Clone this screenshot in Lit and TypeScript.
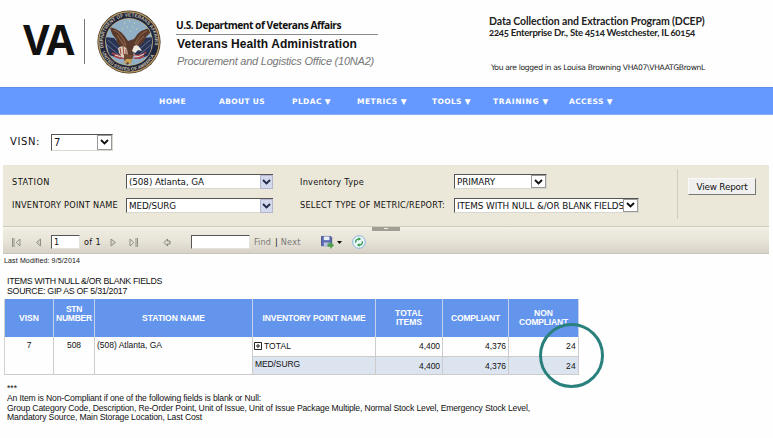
import { LitElement, html, css, svg } from "lit";
import { customElement, property } from "lit/decorators.js";

/** One line of text, tracked so that it fills the given width. */
@customElement("fit-text")
class FitText extends LitElement {
  @property() text = "";
  @property({ type: Number }) w = 0;

  static styles = css`
    :host { display: inline-block; white-space: pre; flex: none; text-align: left; }
    .run { display: inline-block; }
  `;

  updated() {
    const run = this.renderRoot.querySelector(".run") as HTMLElement;
    run.style.letterSpacing = "0px";
    const natural = run.getBoundingClientRect().width;
    run.style.letterSpacing = (this.w - natural) / this.text.length + "px";
  }

  render() {
    return html`<span class="run">${this.text}</span>`;
  }
}

const fit = (text: string, w: number) => html`<fit-text .text=${text} .w=${w}></fit-text>`;

const menu = [
  { text: "HOME", w: 27, gap: 0 },
  { text: "ABOUT US", w: 46, gap: 33 },
  { text: "PLDAC ▼", w: 39, gap: 27 },
  { text: "METRICS ▼", w: 50, gap: 26 },
  { text: "TOOLS ▼", w: 39, gap: 25 },
  { text: "TRAINING ▼", w: 56, gap: 22 },
  { text: "ACCESS ▼", w: 44, gap: 20 },
];

const chevron = html`<svg width="9" height="6" viewBox="0 0 9 6"><path d="M1 1L4.5 4.5L8 1" fill="none" stroke="currentColor" stroke-width="1.9"/></svg>`;

const seal = svg`
  <svg width="64" height="64" viewBox="0 0 64 64">
    <defs>
      <path id="arcTop" d="M6.6 38A26 26 0 1 1 57.4 38"/>
      <path id="arcBottom" d="M5 42A28.8 28.8 0 0 0 59 42"/>
      <clipPath id="disc"><circle cx="32" cy="32" r="23.2"/></clipPath>
    </defs>
    <circle cx="32" cy="32" r="31.6" fill="#4b3c2a"/>
    <circle cx="32" cy="32" r="30.2" fill="none" stroke="#b59a68" stroke-width="1.3"/>
    <circle cx="32" cy="32" r="29.3" fill="#20263c"/>
    <circle cx="32" cy="32" r="23.9" fill="#c0a673"/>
    <circle cx="32" cy="32" r="23.2" fill="#91b0c6"/>
    <g font-family="Liberation Sans" font-weight="bold" font-size="4.7" fill="#c9bfa6">
      <text><textPath href="#arcTop" textLength="90">DEPARTMENT OF VETERANS AFFAIRS</textPath></text>
      <text><textPath href="#arcBottom" textLength="66">UNITED STATES OF AMERICA</textPath></text>
    </g>
    <g clip-path="url(#disc)">
      <path d="M8 27L17 28L29 42L24 49L12 45Z" fill="#293353"/>
      <path d="M56 27L47 28L36 42L42 49L53 45Z" fill="#293353"/>
      <path d="M11 30l15 13M9 34l14 12M53 30L38 43M55 34L41 46" stroke="#65708e" stroke-width="1"/>
      <path d="M15 43q6 4 13 2M17 46q6 3 12 2M49 42q-5 5-12 3M47 46q-4 3-10 2" fill="none" stroke="#ae4649" stroke-width="1.7"/>
      <path d="M18 45q6 3 11 1M47 44q-5 4-10 2" fill="none" stroke="#e9e2dd" stroke-width="1"/>
      <path d="M13 17Q24 19 31 31L37 29Q43 18 56 18Q54 23 49 27Q48 32 42 36L37 40L36 47L27 46L26 39Q20 35 19 29Q14 24 13 17Z" fill="#58392b"/>
      <path d="M17 20Q25 24 29 35M20 25Q24 31 29 38M50 21Q43 23 38 34M47 26Q42 30 38 37" fill="none" stroke="#8a6144" stroke-width="1.3"/>
      <path d="M21 38Q26 34 30 39L31 46L26 48L22 43Z" fill="#d9cfbd"/>
      <path d="M23 38l1 6M26 37l1 8M29 39v7" stroke="#9d4138" stroke-width="1"/>
      <path d="M37 36Q41 34 43 38L45 41L41 40L38 43L35 41Z" fill="#eeeae2"/>
      <path d="M27 44L37 45L34 52L30 55L27 50Z" fill="#6b4631"/>
      <path d="M29 49l-3 5 5-2 3 3 1-6" fill="#c8a056"/>
      <path d="M27 13h1M32 11h1M37 13h1M30 17h1M35 17h1M25 19h1M33 21h1M39 19h1" stroke="#dbd8a4" stroke-width="1.1"/>
    </g>
  </svg>`;

@customElement("app-root")
class AppRoot extends LitElement {
  static styles = css`
    :host { display: block; position: relative; width: 773px; height: 438px; overflow: hidden; background: #fefefe; color: #111; font-family: "Liberation Sans", Arial, sans-serif; }
    * { box-sizing: border-box; }
    svg { display: block; flex: none; }

    .head { display: flex; height: 87px; }
    .va { margin: 10px 0 0 23px; width: 50px; font: bold 41px/58px "Open Sans", sans-serif; color: #111; }
    .rule { width: 1px; height: 45px; margin: 19px 12px 0 11px; background: #777; }
    .seal { margin-top: 10px; width: 64px; }
    .org { display: flex; flex-direction: column; width: 202px; margin: 17px 0 0 15px; }
    .dept { height: 17px; font: bold 10.2px/16px "Open Sans", sans-serif; }
    .vha { height: 19px; padding: 1px 0 0 1px; border-top: 1px solid #888; font-weight: bold; font-size: 12px; line-height: 16px; }
    .office { padding-left: 1px; font-style: italic; font-size: 11px; line-height: 16px; color: #777; }
    .program { display: flex; flex-direction: column; margin: 15px 0 0 111px; font-family: Lato, sans-serif; font-weight: bold; color: #222; }
    .dcep { font-size: 10.5px; line-height: 12px; height: 12px; }
    .addr { font-size: 9.6px; line-height: 12px; height: 12px; font-variant-numeric: oldstyle-nums; }
    .login { margin: 23px 0 0 2px; font: 7.6px/12px "DejaVu Sans", sans-serif; }

    .nav { display: flex; align-items: center; height: 28px; padding: 2px 0 0 159px; background: #6699ff; border-top: 1px solid #5f8ee8; border-bottom: 1px solid #86acf8; color: #fff; font: bold 7.5px/12px "DejaVu Sans", sans-serif; }

    .visn { display: flex; align-items: center; height: 50px; padding: 4px 0 0 10px; font: 10px/14px "DejaVu Sans", sans-serif; }
    .select { display: flex; align-items: stretch; height: 15px; background: #fff; border: 1px solid #d8d8d0; border-top-color: #555; border-left-color: #555; font: 8.8px/14px "DejaVu Sans", sans-serif; }
    .select .val { flex: 1; padding-left: 2px; white-space: nowrap; overflow: visible; width: 0; }
    .select .arrow { display: flex; align-items: center; justify-content: center; width: 15px; border: 1px solid #999; background: #fff; }
    .s-visn { width: 62px; height: 17px; margin-left: 11px; font-size: 10px; line-height: 15px; }
    .combo { border-right: 0; }
    .combo .arrow { width: 13px; height: 14px; border-color: #b3b8ce; background: #d3d8ec; color: #222b4c; }

    .params { display: flex; width: 766px; height: 61px; margin-left: 3px; background: #ece8d9; font: 8.2px/12px "DejaVu Sans", sans-serif; }
    .fields { display: grid; grid-template-columns: 114px 147px 27px 154px 1fr; grid-template-rows: 23px 24px; align-items: center; width: 674px; height: 53px; padding: 5px 0 0 9px; }
    .c4 { grid-column: 4; }
    .s-prim { width: 93px; }
    .s-metric { width: 185px; }
    .side { display: flex; border-left: 1px solid #cfcbbd; height: 50px; margin-top: 4px; padding: 9px 0 0 10px; }
    .btn { width: 68px; height: 17px; background: #f0f0ef; border: 1px solid #fafafa; border-right-color: #777; border-bottom-color: #777; text-align: center; font: 8.8px/16px "DejaVu Sans", sans-serif; }

    .split { display: flex; justify-content: center; width: 766px; height: 3px; margin-left: 3px; background: #f3f1e7; border-top: 1px solid #d0cdbf; }
    .grip { width: 28px; height: 4px; background: #a19f95; z-index: 1; display: flex; justify-content: center; }
    .dot { width: 4px; height: 1px; margin-top: 1px; background: #f0efe8; }

    .bar { display: flex; align-items: center; width: 766px; height: 25px; margin-left: 3px; padding: 2px 0 0 8px; background: linear-gradient(#efece1, #e7e3d7 50%, #d6d2c8); border-bottom: 1px solid #c8c5bb; font: 9px/12px "DejaVu Sans Condensed", sans-serif; }
    .box { height: 14px; background: #fff; border: 1px solid #e4e2da; border-top-color: #555; border-left-color: #555; padding-left: 2px; line-height: 12px; }
    .find { color: #777; }

    .report { display: flex; flex-direction: column; padding-left: 4px; }
    .modified { font-size: 7px; line-height: 13px; height: 22px; }
    .modified, .title { white-space: nowrap; }
    .title { padding-left: 3px; font-size: 8.8px; line-height: 11px; height: 10px; }
    .table { display: grid; grid-template-columns: 49px 41px 158px 123px 67px 66px 70px; grid-template-rows: 38px 19px 19px; width: 575px; margin-top: 3px; font-size: 8.5px; line-height: 9px; border-left: 1px solid #d3d3d3; }
    .th { display: flex; flex-direction: column; align-items: center; justify-content: center; background: #6495ed; color: #fff; font-weight: bold; border-right: 1px solid #c4d2ea; }
    .th.up { padding-bottom: 9px; }
    .td { border-right: 1px solid #ccc; padding: 4px 2px 0 2px; }
    .tall { grid-row: span 2; border-bottom: 1px solid #ccc; }
    .mid { text-align: center; }
    .num { text-align: right; padding-top: 5px; }
    .tot { display: flex; gap: 2px; padding-top: 5px; padding-left: 1px; }
    .alt { background: #dce4f0; border-top: 1px solid #ccc; border-bottom: 1px solid #ccc; padding-top: 3px; }
    .alt.num { padding-top: 5px; }
    .notes { display: flex; flex-direction: column; padding: 9px 0 0 3px; font-size: 8.6px; line-height: 9.5px; }
    .notes fit-text { height: 9.6px; }
    .stars { height: 10px; }

    .ring { position: absolute; left: 539px; top: 323px; width: 65px; height: 65px; border: 3px solid #2a807d; border-radius: 50%; }

    .m3 { margin-left: 3px; } .m5 { margin-left: 5px; } .m9 { margin-left: 9px; } .m4 { margin-left: 4px; }
    .m10 { margin-left: 10px; } .m12 { margin-left: 12px; } .m14 { margin-left: 14px; } .m16 { margin-left: 16px; }
    .m20 { margin-left: 20px; } .m24 { margin-left: 24px; }
    .page { width: 29px; } .query { width: 59px; }
  `;

  select(value: string, w: number, cls: string) {
    return html`<div class="select ${cls}"><span class="val">${fit(value, w)}</span><span class="arrow">${chevron}</span></div>`;
  }

  render() {
    return html`
      <header class="head">
        <div class="va">${fit("VA", 48)}</div>
        <div class="rule"></div>
        <div class="seal">${seal}</div>
        <div class="org">
          <div class="dept">${fit("U.S. Department of Veterans Affairs", 165)}</div>
          <div class="vha">${fit("Veterans Health Administration", 180)}</div>
          <div class="office">${fit("Procurement and Logistics Office (10NA2)", 197)}</div>
        </div>
        <div class="program">
          <div class="dcep">${fit("Data Collection and Extraction Program (DCEP)", 216)}</div>
          <div class="addr">${fit("2245 Enterprise Dr., Ste 4514 Westchester, IL 60154", 206)}</div>
          <div class="login">${fit("You are logged in as Louisa Browning VHA07\\VHAATGBrownL", 214)}</div>
        </div>
      </header>
      <nav class="nav">
        ${menu.map((m) => html`<span style="margin-left:${m.gap}px">${fit(m.text, m.w)}</span>`)}
      </nav>
      <div class="visn">${fit("VISN:", 30)}${this.select("7", 6, "s-visn")}</div>
      <section class="params">
        <div class="fields">
          ${fit("STATION", 38)}
          ${this.select("(508) Atlanta, GA", 75, "combo")}
          <span class="c4">${fit("Inventory Type", 64)}</span>
          ${this.select("PRIMARY", 38, "s-prim")}
          ${fit("INVENTORY POINT NAME", 106)}
          ${this.select("MED/SURG", 47, "combo")}
          <span class="c4">${fit("SELECT TYPE OF METRIC/REPORT:", 145)}</span>
          ${this.select("ITEMS WITH NULL &/OR BLANK FIELDS", 167, "s-metric")}
        </div>
        <div class="side"><div class="btn">${fit("View Report", 51)}</div></div>
      </section>
      <div class="split"><div class="grip"><div class="dot"></div></div></div>
      <div class="bar">
        <svg width="10" height="9" viewBox="0 0 10 9" fill="#e4e1d8" stroke="#918f88"><path d="M1.5 0v9M3 0v9" /><path d="M9 1v7L5.2 4.5Z"/></svg>
        <svg class="m14" width="7" height="9" viewBox="0 0 7 9" fill="#d4d1c8" stroke="#918f88"><path d="M5.5 1v7L1.5 4.5Z"/></svg>
        <div class="box page m9">1</div>
        <span class="m4">${fit("of 1", 17)}</span>
        <svg class="m9" width="7" height="9" viewBox="0 0 7 9" fill="#d4d1c8" stroke="#918f88"><path d="M1 1v7L5.5 4.5Z"/></svg>
        <svg class="m12" width="10" height="9" viewBox="0 0 10 9" fill="#e4e1d8" stroke="#918f88"><path d="M1 1v7L4.8 4.5Z"/><path d="M7 0v9M8.5 0v9"/></svg>
        <svg class="m24" width="8" height="9" viewBox="0 0 8 9" fill="#dedbd2" stroke="#858379"><path d="M1 4.5L4.5 1v2H7v3H4.5v2Z"/></svg>
        <div class="box query m20"></div>
        <span class="find m4">${fit("Find", 17)}</span>
        <span class="m4">|</span>
        <span class="find m3">${fit("Next", 20)}</span>
        <svg class="m20" width="13" height="14" viewBox="0 0 14 15">
          <path d="M.5 1.5h10l1 1v9h-11Z" fill="#5a6ab0" stroke="#46548f"/>
          <path d="M3 1.5h6v4H3Z" fill="#e9edf8"/><path d="M3 8h6v4H3Z" fill="#b8c3e2"/>
          <path d="M7 9.2h3V7l4 4-4 4v-2.4H7Z" fill="#4fa04c"/>
        </svg>
        <svg class="m3" width="5" height="3" viewBox="0 0 5 3"><path d="M0 0h5L2.5 3Z" fill="#111"/></svg>
        <svg class="m10" width="14" height="14" viewBox="0 0 14 14">
          <circle cx="7" cy="7" r="6.3" fill="#edf6fb" stroke="#86b3d6"/>
          <path d="M3.6 7.8Q3.4 4 7 3.8M10.4 6.2Q10.6 10 7 10.2" fill="none" stroke="#2f9a48" stroke-width="1.3"/>
          <path d="M6.4 2.2L9.2 4L6.4 5.8ZM7.6 8.2L4.8 10L7.6 11.8Z" fill="#2f9a48"/>
        </svg>
      </div>
      <main class="report">
        <div class="modified">${fit("Last Modified: 9/5/2014", 76)}</div>
        <div class="title">${fit("ITEMS WITH NULL &/OR BLANK FIELDS", 155)}</div>
        <div class="title">${fit("SOURCE: GIP AS OF 5/31/2017", 120)}</div>
        <div class="table">
          <div class="th">${fit("VISN", 20)}</div>
          <div class="th up">${fit("STN", 16)}${fit("NUMBER", 36)}</div>
          <div class="th">${fit("STATION NAME", 63)}</div>
          <div class="th">${fit("INVENTORY POINT NAME", 103)}</div>
          <div class="th">${fit("TOTAL", 28)}${fit("ITEMS", 26)}</div>
          <div class="th">${fit("COMPLIANT", 49)}</div>
          <div class="th">${fit("NON", 19)}${fit("COMPLIANT", 49)}</div>
          <div class="td tall mid">7</div>
          <div class="td tall mid">${fit("508", 14)}</div>
          <div class="td tall">${fit("(508) Atlanta, GA", 65)}</div>
          <div class="td tot">
            <svg width="8" height="8" viewBox="0 0 8 8"><path d="M.5 .5h7v7h-7ZM2 4h4M4 2v4" fill="none" stroke="#222"/></svg>
            ${fit("TOTAL", 27)}
          </div>
          <div class="td num">${fit("4,400", 21)}</div>
          <div class="td num">${fit("4,376", 21)}</div>
          <div class="td num">${fit("24", 10)}</div>
          <div class="td alt">${fit("MED/SURG", 45)}</div>
          <div class="td alt num">${fit("4,400", 21)}</div>
          <div class="td alt num">${fit("4,376", 21)}</div>
          <div class="td alt num">${fit("24", 10)}</div>
        </div>
        <div class="notes">
          <div class="stars">${fit("***", 10)}</div>
          ${fit("An Item is Non-Compliant if one of the following fields is blank or Null:", 254)}
          ${fit("Group Category Code, Description, Re-Order Point, Unit of Issue, Unit of Issue Package Multiple, Normal Stock Level, Emergency Stock Level,", 523)}
          ${fit("Mandatory Source, Main Storage Location, Last Cost", 195)}
        </div>
      </main>
      <div class="ring"></div>
    `;
  }
}
